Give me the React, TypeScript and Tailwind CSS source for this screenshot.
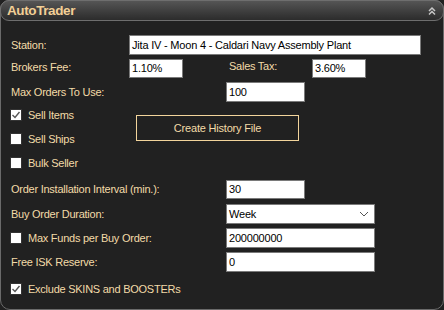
import React from 'react';

const label = 'text-[11px] tracking-[-0.25px] text-[#f3dba8] leading-none whitespace-nowrap';
const box = 'h-[20px] bg-white border border-[#7a7a7a] text-[11px] tracking-[-0.2px] text-black leading-none flex items-center px-[2px] whitespace-nowrap';

const CheckBox: React.FC<{ checked?: boolean }> = ({ checked }) => (
  <div className="w-[12px] h-[12px] bg-white border border-[#333] flex items-center justify-center shrink-0">
    {checked && (
      <svg width="10" height="10" viewBox="0 0 10 10">
        <path d="M1.5 5 L4 7.5 L8.5 2" fill="none" stroke="#555" strokeWidth="1.4" />
      </svg>
    )}
  </div>
);

const CheckRow: React.FC<{ text: string; checked?: boolean }> = ({ text, checked }) => (
  <div className="flex items-center gap-[6px] pl-[9px]">
    <CheckBox checked={checked} />
    <span className={label}>{text}</span>
  </div>
);

export default function App() {
  return (
    <div
      className="w-[444px] h-[310px] bg-[#212121] overflow-hidden"
      style={{ fontFamily: '"Liberation Sans", Arial, sans-serif' }}
    >
      <div className="w-[444px] h-[310px] border border-[#6a6a6a] rounded-t-[9px] rounded-b-[10px] flex flex-col">
        {/* header */}
        <div className="h-[21px] -m-px mb-0 rounded-[9px] border border-[#6e6e6e] bg-gradient-to-b from-[#555] to-[#2c2c2c] flex items-center justify-between pl-[6px] pr-[6px]">
          <span className="text-[13.5px] font-bold text-[#f2cf95] leading-none tracking-[-0.4px]">AutoTrader</span>
          <svg width="10" height="10" viewBox="0 0 10 10">
            <path d="M2 5 L5 2 L8 5 M2 8.5 L5 5.5 L8 8.5" fill="none" stroke="#c8c8c8" strokeWidth="1.5" />
          </svg>
        </div>

        {/* station */}
        <div className="flex items-center mt-[14px] h-[20px] pl-[10px]">
          <span className={`${label} w-[118px]`}>Station:</span>
          <div className={`${box} w-[292px]`}>Jita IV - Moon 4 - Caldari Navy Assembly Plant</div>
        </div>

        {/* fees */}
        <div className="flex items-center mt-[4px] h-[19px] pl-[10px]">
          <span className={`${label} w-[118px] -mt-[3px]`}>Brokers Fee:</span>
          <div className={`${box} !h-[19px] w-[54px]`}>1.10%</div>
          <span className={`${label} ml-[46px] w-[83px] -mt-[5px]`}>Sales Tax:</span>
          <div className={`${box} !h-[19px] w-[54px]`}>3.60%</div>
        </div>

        {/* max orders */}
        <div className="flex items-center mt-[4px] h-[20px] pl-[10px]">
          <span className={`${label} w-[215px]`}>Max Orders To Use:</span>
          <div className={`${box} w-[79px]`}>100</div>
        </div>

        {/* checkboxes + button */}
        <div className="flex mt-[7px] h-[64px]">
          <div className="flex flex-col w-[135px]">
            <CheckRow text="Sell Items" checked />
            <div className="mt-[12px]"><CheckRow text="Sell Ships" /></div>
            <div className="mt-[12px]"><CheckRow text="Bulk Seller" /></div>
          </div>
          <div className="mt-[6px] w-[163px] h-[26px] border border-[#f3d59c] flex items-center justify-center text-[11px] tracking-[-0.2px] text-[#f3dba8] leading-none">
            Create History File
          </div>
        </div>

        {/* interval */}
        <div className="flex items-center mt-[7px] h-[19px] pl-[10px]">
          <span className={`${label} w-[215px]`}>Order Installation Interval (min.):</span>
          <div className={`${box} !h-[19px] w-[79px]`}>30</div>
        </div>

        {/* duration */}
        <div className="flex items-center mt-[5px] h-[20px] pl-[10px]">
          <span className={`${label} w-[215px]`}>Buy Order Duration:</span>
          <div className={`${box} w-[149px] justify-between`}>
            <span>Week</span>
            <svg width="10" height="6" viewBox="0 0 10 6" className="mr-[3px]">
              <path d="M1 1 L5 5 L9 1" fill="none" stroke="#555" strokeWidth="1" />
            </svg>
          </div>
        </div>

        {/* max funds */}
        <div className="flex items-center mt-[4px] h-[20px]">
          <div className="w-[225px]"><CheckRow text="Max Funds per Buy Order:" /></div>
          <div className={`${box} w-[149px]`}>200000000</div>
        </div>

        {/* free isk */}
        <div className="flex items-center mt-[4px] h-[20px] pl-[10px]">
          <span className={`${label} w-[215px]`}>Free ISK Reserve:</span>
          <div className={`${box} w-[149px]`}>0</div>
        </div>

        {/* exclude */}
        <div className="mt-[11px]">
          <CheckRow text="Exclude SKINS and BOOSTERs" checked />
        </div>
      </div>
    </div>
  );
}
